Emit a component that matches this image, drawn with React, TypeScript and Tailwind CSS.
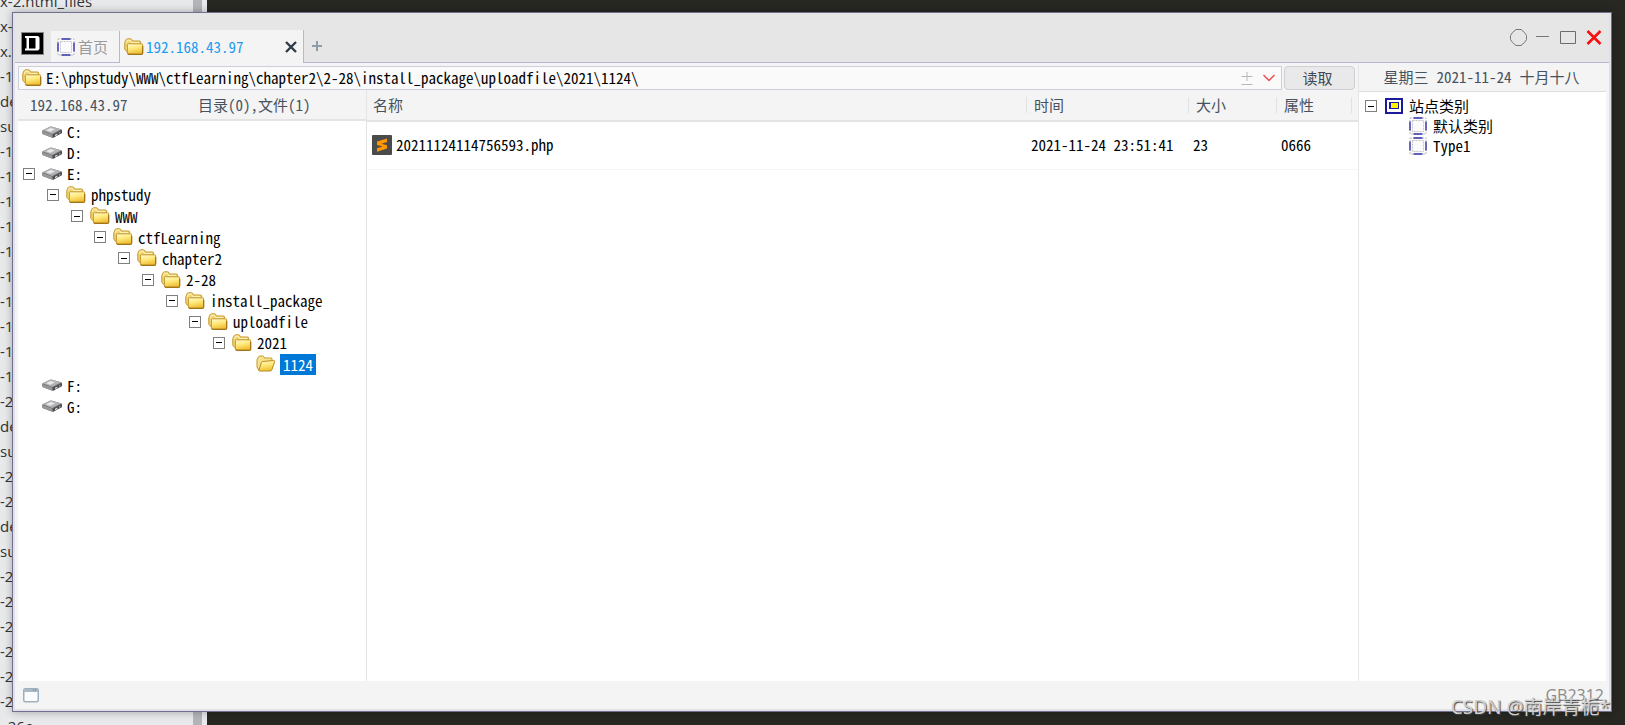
import type { ReactNode } from "react";

const FONT = "font-['Noto_Sans_Mono_CJK_SC','Noto_Sans_CJK_SC',monospace]";

const backdropLines = [
  "x-2.html_files", "x-2.html", "x.html", "-1", "de", "su", "-1", "-1", "-1", "-1",
  "-1", "-1", "-1", "-1", "-1", "-1", "-2", "de", "su", "-2",
  "-2", "de", "su", "-2", "-2", "-2", "-2", "-2", "-2", "  26c",
];

type NodeKind = "drive" | "folder" | "open";
interface TreeItem {
  label: string;
  depth: number;
  kind: NodeKind;
  expanded?: boolean;
}

const tree: TreeItem[] = [
  { label: "C:", depth: 0, kind: "drive" },
  { label: "D:", depth: 0, kind: "drive" },
  { label: "E:", depth: 0, kind: "drive", expanded: true },
  { label: "phpstudy", depth: 1, kind: "folder", expanded: true },
  { label: "WWW", depth: 2, kind: "folder", expanded: true },
  { label: "ctfLearning", depth: 3, kind: "folder", expanded: true },
  { label: "chapter2", depth: 4, kind: "folder", expanded: true },
  { label: "2-28", depth: 5, kind: "folder", expanded: true },
  { label: "install_package", depth: 6, kind: "folder", expanded: true },
  { label: "uploadfile", depth: 7, kind: "folder", expanded: true },
  { label: "2021", depth: 8, kind: "folder", expanded: true },
  { label: "1124", depth: 9, kind: "open" },
  { label: "F:", depth: 0, kind: "drive" },
  { label: "G:", depth: 0, kind: "drive" },
];

function FolderIcon() {
  return (
    <svg width="20" height="18" viewBox="0 0 20 18" className="shrink-0" aria-hidden="true">
      <defs>
        <linearGradient id="folderFront" x1="0" y1="0" x2="0.3" y2="1">
          <stop offset="0" stopColor="#fffbd2" />
          <stop offset="0.5" stopColor="#ffe97c" />
          <stop offset="1" stopColor="#efc136" />
        </linearGradient>
      </defs>
      <path d="M0.8 4.5 L2.2 1.6 Q2.6 0.8 3.6 0.8 H6.5 Q7.5 0.8 8 2 L8.4 3 H15.4 Q16.6 3 16.6 4.2 V14 H3.4 L0.8 11.5Z" fill="#f0d572" stroke="#c4962b" />
      <path d="M2.2 4.8 L3.4 2.2 H6.5 L7.5 4.4 H15" fill="none" stroke="#fff6c0" />
      <path d="M4.2 5.8 H17.6 Q18.6 5.8 18.6 6.8 V15 Q18.6 16.2 17.4 16.2 H4.8 Q3.4 16.2 3.4 14.8 V6.6 Q3.4 5.8 4.2 5.8Z" fill="url(#folderFront)" stroke="#c4962b" />
      <path d="M3.6 15.6 Q4 16.4 5 16.4 H17.4 Q18.7 16.3 18.7 15 V8" fill="none" stroke="#a2741a" strokeWidth="1.2" />
    </svg>
  );
}

function OpenFolderIcon() {
  return (
    <svg width="20" height="18" viewBox="0 0 20 18" className="shrink-0" aria-hidden="true">
      <path d="M1 4.5 L2.5 1.8 Q3 1 4 1 H6.5 Q7.5 1 8 2 L8.5 3 H15 Q16 3 16 4 V13 L3 15.5 L1 12Z" fill="#f7e28c" stroke="#c4962b" />
      <path d="M6.5 6.5 L17.5 5.5 Q19 5.5 18.6 6.8 L16 14.5 Q15.6 16 14 16 H3.5 Q2.6 16 3 15 L5.5 7.3 Q5.8 6.6 6.5 6.5Z" fill="url(#folderFront)" stroke="#b98a22" />
    </svg>
  );
}

function DriveIcon() {
  return (
    <svg width="20" height="14" viewBox="0 0 20 14" className="shrink-0" aria-hidden="true">
      <path d="M0.5 5.2 L8 1.8 Q9 1.4 10 1.7 L19 4.2 Q20 4.6 20 5.5 V8 L11.5 12.6 Q10.5 13 9.5 12.6 L1 9.2 Q0 8.6 0 7.5Z" fill="#6f6f72" />
      <path d="M0.5 5.2 L8 1.8 Q9 1.4 10 1.7 L19 4.4 L11 8.6 Q10.4 9 9.6 8.7Z" fill="#b4b4b7" />
      <path d="M4 5.2 L8.6 3 L13 4.2 L8.4 6.8Z" fill="#e9e9ea" />
      <path d="M0.3 6 L10 9.4 V12.6 L1 9.2 Q0.2 8.6 0.2 7.5Z" fill="#98989b" />
      <path d="M11 9.4 L20 5 V8 L11 12.8Z" fill="#4f4f53" />
      <path d="M13 9.8 L15.4 8.6 V10 L13 11.2Z" fill="#d8d8da" />
      <path d="M17 7.6 L18.4 6.9 V8 L17 8.7Z" fill="#b5b5b8" />
    </svg>
  );
}

function DashedSquareIcon() {
  return (
    <svg width="18" height="18" viewBox="0 0 18 18" className="shrink-0" aria-hidden="true">
      <rect x="1" y="1" width="16" height="16" fill="#fbfbfd" stroke="#bdbdc2" strokeDasharray="2 1" />
      <rect x="3.5" y="3.5" width="11" height="11" fill="none" stroke="#c4c4c8" strokeDasharray="2 1" />
      <path d="M4.5 1 H13.5 M4.5 17 H13.5 M1 4.5 V13.5 M17 4.5 V13.5" stroke="#3334a8" strokeWidth="1.4" />
    </svg>
  );
}

function ExpandBox() {
  return (
    <button type="button" aria-label="折叠" className="flex size-3 shrink-0 items-center justify-center border border-[#7f7f7f] bg-white">
      <span className="h-px w-1.5 bg-black" />
    </button>
  );
}

function IconButton({ label, children }: { label: string; children: ReactNode }) {
  return (
    <button type="button" aria-label={label} className="flex h-5 items-center justify-center">
      {children}
    </button>
  );
}

function TreeRow({ item }: { item: TreeItem }) {
  const selected = item.kind === "open";
  return (
    <li className="flex items-center" style={{ paddingLeft: Math.round(item.depth * 23.75) }}>
      <span className="mr-[7px] flex w-3 shrink-0">{item.expanded && <ExpandBox />}</span>
      {item.kind === "drive" && <DriveIcon />}
      {item.kind === "folder" && <FolderIcon />}
      {item.kind === "open" && <OpenFolderIcon />}
      <span className={selected ? "ml-1 bg-[#0078d7] px-[3px] leading-[21px] text-white" : "ml-0.5 px-[3px] leading-[21px]"}>
        {item.label}
      </span>
    </li>
  );
}

function TitleBar() {
  return (
    <header className="flex h-[50px] items-end bg-[#e6e6e6]">
      <div className="flex h-full w-9 shrink-0 items-center border-b border-[#b9b7cf] pt-3 pl-1.5">
        <svg width="23" height="23" viewBox="0 0 23 23" aria-hidden="true">
          <rect width="23" height="23" fill="#8a8a8a" />
          <rect x="1" y="1" width="21" height="21" fill="#000" />
          <path d="M4 4 H17 L18.5 5.5 V17 L17 18.5 H4 V16.5 H5.5 V6 H4Z" fill="#fff" />
          <rect x="8" y="6" width="6.5" height="10.5" fill="#000" />
        </svg>
      </div>
      <nav className="flex shrink-0 items-end">
        <button type="button" className="flex h-8 w-[69px] items-center gap-[3px] border-r border-b border-[#b9b7cf] bg-[#f4f4f4] pl-1.5 text-[#9a9a9a]">
          <DashedSquareIcon />
          首页
        </button>
        <div className="flex h-[33px] w-[184px] items-center border-r border-[#b9b7cf] bg-[#f4f4f4] pl-1 text-[#1e9bf0]">
          <FolderIcon />
          <span className="ml-0.5">192.168.43.97</span>
          <button type="button" aria-label="关闭标签" className="mr-1.5 ml-auto">
            <svg width="12" height="12" viewBox="0 0 12 12">
              <path d="M1 1 L11 11 M11 1 L1 11" stroke="#2f3b47" strokeWidth="2.4" />
            </svg>
          </button>
        </div>
      </nav>
      <div className="flex h-full flex-1 items-end border-b border-[#b9b7cf]">
        <button type="button" aria-label="新标签" className="mb-2.5 ml-2">
          <svg width="10" height="12" viewBox="0 0 10 12">
            <path d="M5 1 V11 M0 6 H10" stroke="#8c9ca8" strokeWidth="2" />
          </svg>
        </button>
        <div className="mr-[7px] mb-[15px] ml-auto flex items-center">
          <IconButton label="皮肤">
            <svg width="17" height="17" viewBox="0 0 17 17">
              <path d="M6 0.5 H11 L14.5 3.5 L16.5 6.5 V10.5 L14.5 13.5 L11 16.5 H6 L2.5 13.5 L0.5 10.5 V6.5 L2.5 3.5Z" fill="none" stroke="#777" />
            </svg>
          </IconButton>
          <span className="w-[9px]" />
          <IconButton label="最小化">
            <svg width="13" height="17" viewBox="0 0 13 17"><path d="M0 7.5 H13" stroke="#777" /></svg>
          </IconButton>
          <span className="w-[11px]" />
          <IconButton label="最大化">
            <svg width="16" height="17" viewBox="0 0 16 17"><path d="M0.5 2.5 H15.5 V14.5 H0.5Z" fill="none" stroke="#6c6c6c" /></svg>
          </IconButton>
          <span className="w-2.5" />
          <IconButton label="关闭">
            <svg width="16" height="15" viewBox="0 0 16 15"><path d="M1.5 1 L14.5 14 M14.5 1 L1.5 14" stroke="#f80f0f" strokeWidth="2.6" /></svg>
          </IconButton>
        </div>
      </div>
    </header>
  );
}

function AddressBar() {
  return (
    <div className="flex gap-0.5 pt-[3px] pr-[3px]">
      <div className="flex h-6 flex-1 items-center border border-[#cfcedd] bg-[#fafafa] pl-[3px]">
        <FolderIcon />
        <input
          aria-label="路径"
          className="ml-1 min-w-0 flex-1 bg-transparent text-black outline-none"
          defaultValue={"E:\\phpstudy\\WWW\\ctfLearning\\chapter2\\2-28\\install_package\\uploadfile\\2021\\1124\\"}
        />
        <button type="button" aria-label="收藏">
          <svg width="12" height="13" viewBox="0 0 12 13"><path d="M6 0 V9 M0.5 4.5 H11.5 M0.5 12.5 H11.5" stroke="#b8b8b8" /></svg>
        </button>
        <button type="button" aria-label="历史路径" className="mr-1.5 ml-2.5">
          <svg width="12" height="8" viewBox="0 0 12 8"><path d="M0.5 1 L6 6.5 L11.5 1" fill="none" stroke="#f04a4a" strokeWidth="1.4" /></svg>
        </button>
      </div>
      <button type="button" className="flex h-6 w-[71px] items-center justify-center rounded-sm border border-[#cfcfd8] bg-[#e9e9e9] pr-1 text-[#3c4854]">
        读取
      </button>
    </div>
  );
}

function FileTable() {
  return (
    <table className="w-full table-fixed border-collapse text-left">
      <colgroup>
        <col />
        <col className="w-[162px]" />
        <col className="w-[88px]" />
        <col className="w-[82px]" />
      </colgroup>
      <thead>
        <tr className="h-[31px] border-b-2 border-[#e4e4e4] bg-[#f4f4f4] text-[#46525e]">
          <th className="p-0 pl-1.5 font-normal">名称</th>
          {["时间", "大小"].map((name) => (
            <th key={name} className="p-0 font-normal">
              <span className="flex h-4 items-center border-l border-[#e2e2e2] pl-[7px]">{name}</span>
            </th>
          ))}
          <th className="p-0 pr-1.5 font-normal">
            <span className="flex h-4 items-center border-x border-[#e2e2e2] pl-[7px]">属性</span>
          </th>
        </tr>
      </thead>
      <tbody>
        <tr className="h-12 border-b border-[#f5f5f5] text-black">
          <td className="p-0 pl-[5px]">
            <span className="flex items-center gap-1">
              <svg width="20" height="20" viewBox="0 0 20 20" aria-hidden="true">
                <rect width="20" height="20" rx="1" fill="#4b4b4b" />
                <path d="M5 6.6 L15 3.4 V7 L9.6 8.7 L15 10.2 V13.6 L5 16.8 V13.2 L10.6 11.4 L5 9.9Z" fill="#ff9800" />
              </svg>
              20211124114756593.php
            </span>
          </td>
          <td className="p-0 pl-[5px] whitespace-nowrap">2021-11-24 23:51:41</td>
          <td className="p-0 pl-[5px]">23</td>
          <td className="p-0 pl-[5px]">0666</td>
        </tr>
      </tbody>
    </table>
  );
}

function SitePanel() {
  return (
    <aside className="flex w-[248px] shrink-0 flex-col border-l border-[#e6e6e6]">
      <div className="flex h-[29px] items-center justify-center gap-2 border-b border-[#dcdcdc] bg-[#f4f4f4] pr-0.5 text-[#46525e]">
        <span>星期三</span>
        <span>2021-11-24</span>
        <span>十月十八</span>
      </div>
      <ul className="flex-1 bg-white pt-1 pl-1.5 leading-5 text-black">
        <li className="flex items-center">
          <ExpandBox />
          <svg width="18" height="16" viewBox="0 0 18 16" className="mr-1.5 ml-2" shapeRendering="crispEdges" aria-hidden="true">
            <rect x="1" y="1" width="16" height="14" fill="#fff" stroke="#1b1b9c" strokeWidth="2" />
            <rect x="4" y="4" width="10" height="7" fill="#1b1b9c" />
            <rect x="6" y="5" width="7" height="5" fill="#fff200" />
          </svg>
          站点类别
        </li>
        <li className="flex items-center gap-1.5 pl-11"><DashedSquareIcon />默认类别</li>
        <li className="flex items-center gap-1.5 pl-11"><DashedSquareIcon />Type1</li>
      </ul>
    </aside>
  );
}

export default function App() {
  return (
    <div className={`relative flex h-screen flex-col overflow-hidden bg-[#272822] pt-3 pr-[13px] pb-[13px] pl-3 text-[15px] leading-5 ${FONT}`}>
      <div className="absolute inset-y-0 left-0 flex w-[207px] overflow-hidden bg-[#e8e9eb] font-['Open_Sans',sans-serif] text-[#333]" aria-hidden="true">
        <div className="-mt-[11px] flex-1 text-[15px] leading-[25px] whitespace-pre">
          {backdropLines.map((line, i) => (
            <div key={i}>{line}</div>
          ))}
        </div>
        <div className="mr-[5px] w-[9px] bg-[#b4b5ba]" />
      </div>

      <main className="relative flex flex-1 flex-col border border-[#716f8e] bg-[#f4f4f4] shadow-[0_0_8px_rgba(0,0,0,0.3)]">
        <div className="flex flex-1 flex-col border-2 border-t-0 border-[#e2e1ea]">
          <TitleBar />
          <div className="flex flex-1 pr-[3px] pl-[3px]">
            <div className="flex min-w-0 flex-1 flex-col">
              <AddressBar />
              <div className="flex flex-1">
                <section className="flex w-[349px] shrink-0 flex-col border-r border-[#e4e4e4]">
                  <div className="flex h-[31px] items-center border-b-2 border-[#e4e4e4] bg-[#f4f4f4] pl-3 text-[#46525e]">
                    <span className="w-[168px]">192.168.43.97</span>
                    <span>目录(0),文件(1)</span>
                  </div>
                  <div className="flex-1 bg-white">
                    <ul className="grid h-[296px] auto-rows-fr pl-[5px] text-black">
                      {tree.map((item) => (
                        <TreeRow key={item.label} item={item} />
                      ))}
                    </ul>
                  </div>
                </section>
                <section className="min-w-0 flex-1 bg-white">
                  <FileTable />
                </section>
              </div>
            </div>
            <SitePanel />
          </div>
          <footer className="flex h-7 items-center justify-between pr-[5px] pl-2">
            <button type="button" aria-label="窗口">
              <svg width="16" height="15" viewBox="0 0 16 15">
                <rect x="0.75" y="0.75" width="14.5" height="13" rx="1.5" fill="#fbfcfd" stroke="#9db0bf" strokeWidth="1.5" />
                <path d="M1 1 H15 V4 H1Z" fill="#a9bac6" />
                <path d="M10 2 H11 M12 2 H13" stroke="#5f7486" />
              </svg>
            </button>
            <span className="font-['Open_Sans',sans-serif] text-base leading-5 text-[#8a8a8a]">GB2312</span>
          </footer>
        </div>
      </main>
      <div className="absolute right-[15px] bottom-1.5 font-['Noto_Sans','Noto_Sans_CJK_SC',sans-serif] text-[19px] leading-6 text-[#d0d0d0] [text-shadow:1px_1px_1px_#444]">
        CSDN @南岸青栀*
      </div>
    </div>
  );
}
